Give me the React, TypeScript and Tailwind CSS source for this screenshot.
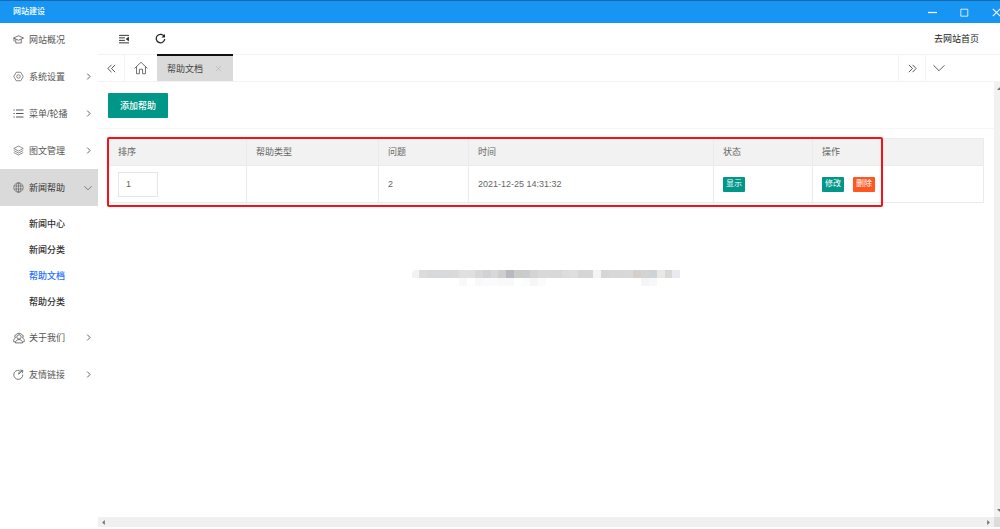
import { useState } from 'react';
import type { ReactNode } from 'react';

interface MenuItem {
  name: string;
  icon: ReactNode;
  children?: string[];
  leaf?: boolean;
}

function Svg({ children, className = 'size-[11px]' }: { children: ReactNode; className?: string }) {
  return (
    <svg
      viewBox="0 0 22 22"
      className={`shrink-0 ${className}`}
      fill="none"
      stroke="currentColor"
      strokeWidth="1.6"
      aria-hidden="true"
    >
      {children}
    </svg>
  );
}

const menus: MenuItem[] = [
  {
    name: '网站概况',
    leaf: true,
    icon: (
      <Svg>
        <path d="M1 8 11 3.500 21 8l-10 4.500L1 8ZM5.500 10.500V18h11v-7.500M2 8.500V15" />
      </Svg>
    ),
  },
  {
    name: '系统设置',
    icon: (
      <Svg>
        <path d="M6.500 2.500h9L20.500 11l-5 8.500h-9L1.500 11l5-8.500Z" strokeLinejoin="round" strokeWidth="1.400" />
        <circle cx="11" cy="11" r="3.500" strokeWidth="1.400" />
      </Svg>
    ),
  },
  {
    name: '菜单/轮播',
    icon: (
      <Svg>
        <path d="M6 4h15M6 11h15M6 18h15M1 4h2.500M1 11h2.500M1 18h2.500" strokeWidth="2" />
      </Svg>
    ),
  },
  {
    name: '图文管理',
    icon: (
      <Svg>
        <path
          d="M1.500 7 11 2l9.500 5-9.500 5-9.500-5ZM1.500 11l9.500 5 9.500-5M1.500 15l9.500 5 9.500-5"
          strokeLinejoin="round"
          strokeWidth="1.300"
        />
      </Svg>
    ),
  },
  {
    name: '新闻帮助',
    children: ['新闻中心', '新闻分类', '帮助文档', '帮助分类'],
    icon: (
      <Svg>
        <g strokeWidth="1.200">
          <circle cx="11" cy="11" r="9.500" />
          <ellipse cx="11" cy="11" rx="4.500" ry="9.500" />
          <path d="M11 1.500v19M2 8h18M2 14h18" />
        </g>
      </Svg>
    ),
  },
  {
    name: '关于我们',
    icon: (
      <Svg className="size-3">
        <g strokeWidth="1.500">
          <circle cx="11" cy="9" r="4" />
          <path d="M4.500 20c0-4 3-6 6.500-6s6.500 2 6.500 6h-13ZM6 4.500C8 1.500 14 1.500 16 4.500M6 4.500C3 5 2.500 9 4.500 11c-2.500 1-4 4-3 7h2.500M16 4.500c3 .5 3.500 4.500 1.500 6.500 2.500 1 4 4 3 7H18" />
        </g>
      </Svg>
    ),
  },
  {
    name: '友情链接',
    icon: (
      <Svg>
        <path d="M13 3a9 9 0 1 0 6.500 8" />
        <path d="M11 11c0-4 2-6.500 6-7M14.500 2l5.500 1-1.500 5.500M12 10l6-6" />
      </Svg>
    ),
  },
];

const columns = [
  { title: '排序', width: 'w-[138px]' },
  { title: '帮助类型', width: 'w-[132px]' },
  { title: '问题', width: 'w-[90px]' },
  { title: '时间', width: 'w-[245px]' },
  { title: '状态', width: 'w-[99px]' },
  { title: '操作', width: '' },
];

const rows = [{ sort: 1, type: '', question: '2', time: '2021-12-25 14:31:32' }];

const blurTop = [
  '#f2f2f2', '#dcdcdc', '#d8d9da', '#d8d9da', '#d8d9da', '#dadada', '#e0e0e0', '#e0e0e0', '#dad8d6',
  '#d0d3d6', '#d8d8d8', '#cfcecc', '#b8b8c0', '#cacac8', '#c9cccf', '#d2d5d3', '#d9d9d9', '#d9d9d9',
  '#d8d8d8', '#dcdcdc', '#dedede', '#d6d6d6', '#d6d6d6', '#f4f4f4', '#d6d6d6', '#d8d8d8', '#d8d8d8',
  '#d9d9d9', '#d4cfca', '#d4d4d4', '#ced3d8', '#e8e8e4', '#d8d8d8', '#e8eaf0',
];
const blurBottom: Record<number, string> = {
  6: '#f9f9f9', 8: '#f9f9f9', 9: '#fbfbfb', 10: '#fbfbfb', 11: '#f9f9f9', 12: '#f9f9f9',
  14: '#fcfcfc', 15: '#f6f6f6', 16: '#fbfbfb', 29: '#f5f5f5', 30: '#f8f8fa',
};

function Sidebar() {
  const [open, setOpen] = useState('新闻帮助');
  const [active, setActive] = useState('帮助文档');

  return (
    <nav className="-mt-0.5 w-[98px] shrink-0">
      {menus.map((menu) => {
        const isOpen = open === menu.name;
        return (
          <div key={menu.name}>
            <button
              type="button"
              onClick={() => setOpen(isOpen ? '' : menu.name)}
              className={`flex h-[37px] w-full items-center pl-[13px] pr-1.5 text-[#555] ${isOpen ? 'bg-[#dadada]' : ''}`}
            >
              <span className="flex w-4 shrink-0">{menu.icon}</span>
              <span className={`flex-1 whitespace-nowrap text-left ${isOpen ? 'text-[#333]' : ''}`}>{menu.name}</span>
              {!menu.leaf && (
                <span className="flex w-2 justify-center">
                  <Svg className={isOpen ? 'size-2' : 'size-[7px]'}>
                    <path d={isOpen ? 'M1 6l10 10L21 6' : 'M7 2l9 9-9 9'} strokeWidth={isOpen ? 2 : 3} />
                  </Svg>
                </span>
              )}
            </button>
            {isOpen && menu.children && (
              <ul className="pb-1 pt-[5px] font-medium">
                {menu.children.map((child) => (
                  <li key={child}>
                    <a
                      href="#"
                      onClick={() => setActive(child)}
                      className={`flex h-[26px] items-center pl-[29px] ${active === child ? 'text-[#1e6fff]' : 'text-[#333]'}`}
                    >
                      {child}
                    </a>
                  </li>
                ))}
              </ul>
            )}
          </div>
        );
      })}
    </nav>
  );
}

function TabBar() {
  return (
    <div className="flex h-7 shrink-0 border-y border-[#f3f3f3] text-[#444]">
      <button type="button" aria-label="向左" className="flex w-[27px] items-center justify-center border-r border-[#f3f3f3]">
        <Svg className="size-[9px]">
          <path d="M11 2 2 11l9 9M20 2l-9 9 9 9" strokeWidth="2.200" />
        </Svg>
      </button>
      <button type="button" aria-label="首页" className="flex w-8 items-center justify-center">
        <Svg className="size-3.5">
          <path d="M1 11.500 11 2l10 9.500M4 9v11h4.500v-7h5v7H18V9" strokeWidth="1.200" />
        </Svg>
      </button>
      <div className="-mt-px flex w-[76px] items-center justify-between border-t-2 border-[#111] bg-[#dadada] pl-2.5 pr-[11px]">
        <span>帮助文档</span>
        <button type="button" aria-label="关闭" className="text-[#b5b5b5]">
          <Svg className="size-[7px]">
            <path d="M3 3l16 16M19 3 3 19" strokeWidth="2.200" />
          </Svg>
        </button>
      </div>
      <div className="flex-1" />
      <button type="button" aria-label="向右" className="flex w-7 items-center justify-center border-x border-[#f3f3f3]">
        <Svg className="size-[9px]">
          <path d="M2 2l9 9-9 9M11 2l9 9-9 9" strokeWidth="2.200" />
        </Svg>
      </button>
      <button type="button" aria-label="更多" className="flex w-[74px] items-center pl-[7px]">
        <Svg className="size-3">
          <path d="M1 6l10 10L21 6" />
        </Svg>
      </button>
    </div>
  );
}

function HelpTable() {
  return (
    <div className="relative">
      <table className="w-full table-fixed border-collapse text-left text-[#666]">
        <thead className="bg-[#f2f2f2]">
          <tr className="h-[27px]">
            {columns.map((col) => (
              <th key={col.title} className={`border border-[#ebebeb] px-[9px] font-normal ${col.width}`}>
                {col.title}
              </th>
            ))}
          </tr>
        </thead>
        <tbody>
          {rows.map((row) => (
            <tr key={row.sort} className="h-[37px]">
              <td className="border border-[#ebebeb] px-[9px]">
                <input
                  type="text"
                  aria-label="排序"
                  defaultValue={row.sort}
                  className="block h-[25px] w-10 border border-[#e6e6e6] px-[7px]"
                />
              </td>
              <td className="border border-[#ebebeb] px-[9px]">{row.type}</td>
              <td className="border border-[#ebebeb] px-[9px]">{row.question}</td>
              <td className="border border-[#ebebeb] px-[9px]">{row.time}</td>
              <td className="border border-[#ebebeb] px-[9px]">
                <button type="button" className="block h-[15px] rounded-[1px] bg-[#009688] px-[3px] text-[8px] leading-none text-white">
                  显示
                </button>
              </td>
              <td className="border border-[#ebebeb] px-[9px]">
                <div className="flex gap-[9px] text-[8px] leading-none text-white">
                  <button type="button" className="h-[15px] rounded-[1px] bg-[#009688] px-[3px]">
                    修改
                  </button>
                  <button type="button" className="h-[15px] rounded-[1px] bg-[#ff5722] px-[3px]">
                    删除
                  </button>
                </div>
              </td>
            </tr>
          ))}
        </tbody>
      </table>
      <div className="pointer-events-none absolute -left-px -top-px h-[70px] w-[776px] rounded-[2px] border-2 border-[#fa0f14]" />
    </div>
  );
}

function BlurredText() {
  return (
    <div className="mx-auto w-[269px]">
      <div className="flex h-2 overflow-hidden rounded-tl">
        {blurTop.map((color, i) => (
          <span key={i} className="flex-1" style={{ backgroundColor: color }} />
        ))}
      </div>
      <div className="flex h-2">
        {blurTop.map((_, i) => (
          <span key={i} className="flex-1" style={{ backgroundColor: blurBottom[i] }} />
        ))}
      </div>
    </div>
  );
}

export default function App() {
  return (
    <div className="flex h-screen flex-col overflow-hidden bg-white pb-0.5 font-['Liberation_Sans','Noto_Sans_CJK_SC',sans-serif] text-[9px] leading-4">
      <header className="relative z-10 flex h-[23px] shrink-0 items-center border-t border-[#1668b0] bg-[#1695f3] pl-[13px] text-[8px] text-white">
        <h1 className="flex-1 font-medium">网站建设</h1>
        <button type="button" aria-label="最小化" className="flex w-8 justify-start">
          <Svg className="size-[9px]">
            <path d="M0 11h22" strokeWidth="3" />
          </Svg>
        </button>
        <button type="button" aria-label="最大化" className="flex w-8 justify-start">
          <Svg className="size-[9px]">
            <path d="M2 3h17v17H2z" strokeWidth="2" />
          </Svg>
        </button>
        <button type="button" aria-label="关闭" className="flex w-2 justify-start">
          <Svg className="size-[9px]">
            <path d="M2 2l18 18M20 2 2 20" strokeWidth="2.500" />
          </Svg>
        </button>
      </header>

      <div className="flex min-h-0 flex-1">
        <Sidebar />
        <main className="flex min-w-0 flex-1 flex-col">
          <div className="flex h-[31px] shrink-0 items-center pl-[21px] pr-[21px] text-[#222]">
            <button type="button" aria-label="折叠菜单">
              <Svg className="size-[10px]">
                <path d="M0 3h22M0 8.500h13M0 14h13M0 19.500h22" strokeWidth="2" />
                <path d="M21 7v8l-5-4z" fill="currentColor" />
              </Svg>
            </button>
            <button type="button" aria-label="刷新" className="ml-[26px]">
              <Svg className="size-[11px]">
                <path d="M18.500 7A8.500 8.500 0 1 0 19.500 12" strokeWidth="2.500" />
                <path d="M20 2v7h-7z" fill="currentColor" stroke="none" />
              </Svg>
            </button>
            <a href="#" className="ml-auto">
              去网站首页
            </a>
          </div>
          <TabBar />
          <div className="flex min-h-0 flex-1">
            <div className="min-w-0 flex-1">
              <div className="border-b border-[#f6f6f6] px-2.5 pb-2.5 pt-[11px]">
                <button type="button" className="block h-[25px] rounded-[1px] bg-[#009688] px-3 font-medium text-white">
                  添加帮助
                </button>
              </div>
              <div className="px-2.5 pb-[67px] pt-[9px]">
                <HelpTable />
              </div>
              <BlurredText />
            </div>
            <div className="flex w-1.5 shrink-0 flex-col justify-between overflow-hidden bg-[#f1f1f1] py-1 text-[#777]">
              <Svg className="ml-[3px] size-[5px]">
                <path d="M0 18 11 6l11 12z" fill="currentColor" stroke="none" />
              </Svg>
              <Svg className="ml-[3px] size-[5px]">
                <path d="M0 4l11 12L22 4z" fill="currentColor" stroke="none" />
              </Svg>
            </div>
          </div>
          <div className="flex h-2.5 shrink-0 text-[#777]">
            <div className="flex flex-1 items-center justify-between bg-[#f0f0f0] px-[3px]">
              <Svg className="size-[5px]">
                <path d="M17 0 5 11l12 11z" fill="currentColor" stroke="none" />
              </Svg>
              <Svg className="size-[5px]">
                <path d="M5 0l12 11L5 22z" fill="currentColor" stroke="none" />
              </Svg>
            </div>
            <div className="w-1.5 bg-[#dcdcdc]" />
          </div>
        </main>
      </div>
    </div>
  );
}
